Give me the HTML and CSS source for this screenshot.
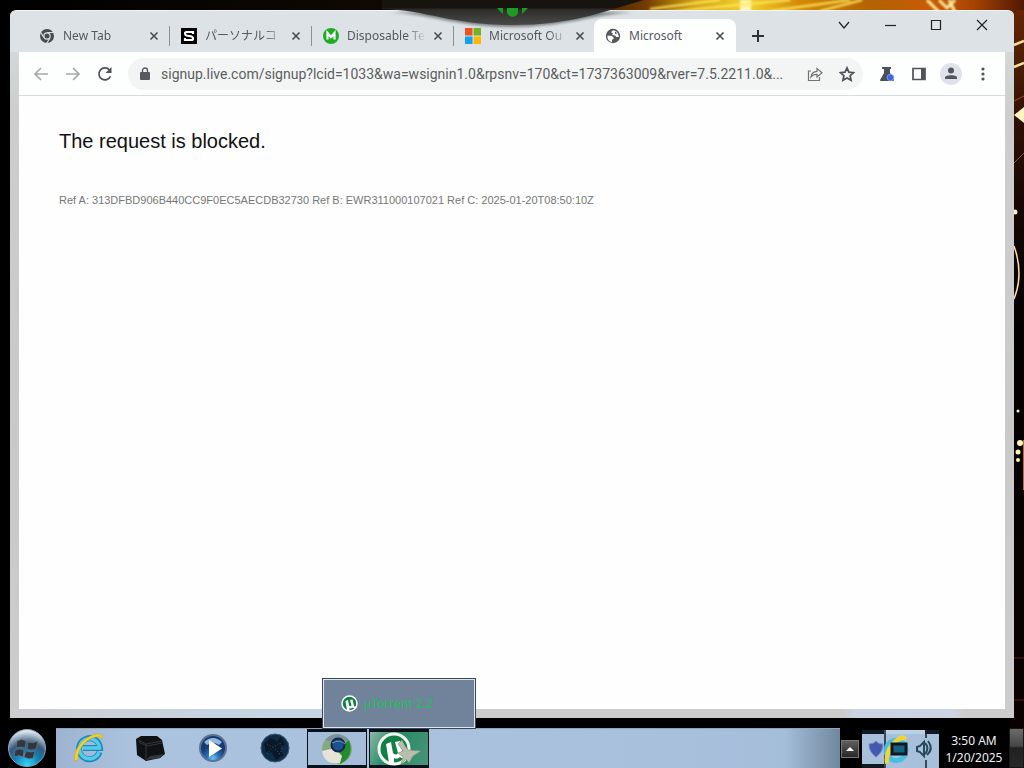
FILE: index.html
```html
<!DOCTYPE html>
<html lang="en">
<head>
<meta charset="utf-8">
<title>Microsoft</title>
<link rel="stylesheet" href="styles.css">
</head>
<body>
<svg class="wallpaper wallpaper-top" viewBox="0 0 1024 60" preserveAspectRatio="xMaxYMin slice" aria-hidden="true">
  <defs>
    <linearGradient id="fire" x1="0" x2="1"><stop offset="0" stop-color="#000"/><stop offset=".52" stop-color="#160c03"/><stop offset=".63" stop-color="#713a00"/><stop offset=".68" stop-color="#d6a412"/><stop offset=".73" stop-color="#f4d32d"/><stop offset=".78" stop-color="#d48a08"/><stop offset=".85" stop-color="#b36302"/><stop offset=".91" stop-color="#c75b05"/><stop offset=".95" stop-color="#a84404"/><stop offset="1" stop-color="#4f1703"/></linearGradient>
    <filter id="glow"><feGaussianBlur stdDeviation="1"/></filter>
  </defs>
  <rect width="1024" height="60" fill="url(#fire)"/>
  <g filter="url(#glow)">
  <path d="M740 0h11v12h-11z" fill="#fff7b0"/>
  <path d="M650 9l70-9M665 12L790 0M770 11l80-11M820 11l42-11" stroke="#ffe760" stroke-width="2" fill="none"/>
  <path d="M927 0l12 12M939 0l8 8 8-8M949 0l6 12" stroke="#ffed9b" stroke-width="3" fill="none"/>
  </g>
</svg>
<svg class="wallpaper wallpaper-side" viewBox="-4 0 14 728" aria-hidden="true">
  <defs><linearGradient id="ember" x1="0" x2="0" y1="0" y2="1"><stop offset="0" stop-color="#6c2403"/><stop offset=".08" stop-color="#4c2003"/><stop offset=".16" stop-color="#321004"/><stop offset=".28" stop-color="#160704"/><stop offset=".45" stop-color="#030100"/><stop offset="1" stop-color="#0b0200"/></linearGradient></defs>
  <rect x="-4" width="14" height="728" fill="url(#ember)"/>
  <g fill="none" stroke="#ffe197" stroke-width="2.5"><path d="M0 45l10-4M0 67l10-4"/><path d="M0 101l10-5M0 163l10-10" stroke="#8f5720" stroke-width="1"/><path d="M0 246q10 28 0 53" stroke-width="1.5"/></g>
  <path d="M0 115l10-8v16z" fill="#fff4bd"/>
  <g fill="#fff0bf"><circle cx="1" cy="212" r="2.500"/><circle cx="4" cy="411" r="1.500"/><circle cx="6" cy="443" r="3"/><circle cx="4" cy="452" r="2.500"/><circle cx="4" cy="460" r="2"/></g>
  <path d="M10 440v50" stroke="#b96f20" stroke-width="2"/>
  <path d="M0 658h10M0 700h10" stroke="#552306"/>
</svg>

<main class="desktop">
  <section class="window" aria-label="Browser">
    <header class="tabstrip">
      <nav class="tabs" aria-label="Tabs">
        <div class="tab">
          <svg class="favicon" viewBox="0 0 16 16"><circle cx="8" cy="8" r="7" fill="#454a50"/><circle cx="8" cy="8" r="3.7" fill="#d9dfe2"/><circle cx="8" cy="8" r="2.5" fill="#454a50"/><path d="M8 4.5h7M4.8 9.5L1.5 4M11 10l-3.5 5.5" stroke="#d9dfe2" stroke-width="1.2"/></svg>
          <span class="title">New Tab</span>
          <button class="close" aria-label="Close New Tab"><svg viewBox="0 0 10 10"><path d="M1.5 1.5l7 7m0-7l-7 7"/></svg></button>
        </div>
        <div class="tab">
          <svg class="favicon" viewBox="0 0 16 16"><path d="M0 0h16v16H0z"/><path d="M12 6V4H5.500Q4 4 4 5.500T5.500 7.500L10.500 8.500Q12 9 12 10.500T10.500 12H4v-2" fill="none" stroke="#fff" stroke-width="2.200"/></svg>
          <span class="title">パーソナルコ</span>
          <button class="close" aria-label="Close tab"><svg viewBox="0 0 10 10"><path d="M1.5 1.5l7 7m0-7l-7 7"/></svg></button>
        </div>
        <div class="tab">
          <svg class="favicon" viewBox="0 0 16 16"><circle cx="8" cy="8" r="8" fill="#20ab25"/><path d="M4.500 11.500V5L8 9l3.500-4v6.500" fill="none" stroke="#fff" stroke-width="2.200"/></svg>
          <span class="title">Disposable Te</span>
          <button class="close" aria-label="Close Disposable Temp"><svg viewBox="0 0 10 10"><path d="M1.5 1.5l7 7m0-7l-7 7"/></svg></button>
        </div>
        <div class="tab">
          <svg class="favicon" viewBox="0 0 16 16"><path d="M0 0h7.500v7.500H0z" fill="#ee5021"/><path d="M8.500 0H16v7.500H8.500z" fill="#72b220"/><path d="M0 8.500h7.500V16H0z" fill="#159ff0"/><path d="M8.500 8.500H16V16H8.500z" fill="#ffb900"/></svg>
          <span class="title">Microsoft Ou</span>
          <button class="close" aria-label="Close Microsoft Outlook"><svg viewBox="0 0 10 10"><path d="M1.500 1.500l7 7m0-7l-7 7"/></svg></button>
        </div>
        <div class="tab active">
          <svg class="favicon" viewBox="0 0 16 16"><circle cx="8" cy="8" r="7.200" fill="#54585c"/><path d="M2.500 7.500L7 8l2 2-2 2v2.200C3.500 13.500 2 10.500 2.500 7.500zM8 2.300l-2 2 2 1-1 1.700 3 .5 1.500 1.500h2.300c0-3.500-2.500-6.500-5.800-6.700z" fill="#fff"/><path d="M10 3.500l2.500 1.800-2.500.7z" fill="#54585c"/></svg>
          <span class="title">Microsoft</span>
          <button class="close" aria-label="Close Microsoft"><svg viewBox="0 0 10 10"><path d="M1.500 1.500l7 7m0-7l-7 7"/></svg></button>
        </div>
      </nav>
      <button class="new-tab" aria-label="New tab"><svg viewBox="0 0 14 14"><path d="M7 1v12M1 7h12"/></svg></button>
      <div class="window-controls">
        <button aria-label="Search tabs"><svg viewBox="0 0 12 12"><path d="M1 3l5 6 5-6"/></svg></button>
        <button aria-label="Minimize"><svg viewBox="0 0 12 12"><path d="M1 6.500h11"/></svg></button>
        <button aria-label="Maximize"><svg viewBox="0 0 12 12"><path d="M1.500 1.500h9v9h-9z"/></svg></button>
        <button aria-label="Close"><svg viewBox="0 0 12 12"><path d="M1 1l10 10M11 1L1 11"/></svg></button>
      </div>
    </header>

    <div class="toolbar">
      <button class="tool faded" aria-label="Back"><svg viewBox="0 0 16 16"><path d="M15 8H2m6-6L2 8l6 6"/></svg></button>
      <button class="tool faded" aria-label="Forward"><svg viewBox="0 0 16 16"><path d="M1 8h13M8 2l6 6-6 6"/></svg></button>
      <button class="tool" aria-label="Reload"><svg viewBox="0 0 16 16"><path d="M13.500 10.200A6 6 0 1 1 12.500 4"/><path d="M14.500 1v6h-6z" fill="#4f5357" stroke="none"/></svg></button>
      <div class="address">
        <svg class="lock" viewBox="0 0 10 14"><path d="M1 5h8q1 0 1 1v6q0 1-1 1H1q-1 0-1-1V6q0-1 1-1z" fill="#56595d"/><path d="M2.500 6V3.500a2.500 2.500 0 0 1 5 0V6" fill="none" stroke="#56595d" stroke-width="1.400"/></svg>
        <input class="url" type="text" aria-label="Address" value="signup.live.com/signup?lcid=1033&amp;wa=wsignin1.0&amp;rpsnv=170&amp;ct=1737363009&amp;rver=7.5.2211.0&amp;...">
        <button class="tool" aria-label="Share"><svg viewBox="0 0 16 16" class="thin"><path d="M4 5H1.500v9.500h11V11M4 11c.5-4 2.500-5.500 6-5.700V2.500L15 6.700 10 11V8.300C7 8.300 5.500 9 4 11z"/></svg></button>
        <button class="tool" aria-label="Bookmark"><svg viewBox="0 0 16 16"><path d="M8 1.800l1.900 4.300 4.600.5-3.400 3.100 1 4.600L8 11.900l-4.100 2.400 1-4.600-3.400-3.100 4.600-.5z"/></svg></button>
      </div>
      <button class="tool" aria-label="Experiments"><svg viewBox="0 0 16 16"><path d="M3 1h9v2h-1v4l4 7q0 1-1 1H2q-1 0-1-1l4-7V3H3z" fill="#4a5158" stroke="none"/><circle cx="11.500" cy="11.500" r="3.300" fill="#3a68e8" stroke="#a6bfff" stroke-width=".6"/></svg></button>
      <button class="tool" aria-label="Side panel"><svg viewBox="0 0 16 16"><path d="M2 2.500h12v11H2z"/><path d="M10 2h4v12h-4z" fill="#4f5357" stroke="none"/></svg></button>
      <button class="tool" aria-label="Profile"><svg class="avatar" viewBox="0 0 22 22"><circle cx="11" cy="11" r="11" fill="#dfe2ea" stroke="none"/><circle cx="11" cy="7.500" r="3" fill="#50565e" stroke="none"/><path d="M5 16v-1.500c0-3 12-3 12 0V16z" fill="#50565e" stroke="none"/></svg></button>
      <button class="tool" aria-label="Menu"><svg viewBox="0 0 16 16"><g fill="#4f5357" stroke="none"><circle cx="8" cy="3" r="1.600"/><circle cx="8" cy="8" r="1.600"/><circle cx="8" cy="13" r="1.600"/></g></svg></button>
    </div>

    <article class="page">
      <h1>The request is blocked.</h1>
      <p>Ref A: 313DFBD906B440CC9F0EC5AECDB32730 Ref B: EWR311000107021 Ref C: 2025-01-20T08:50:10Z</p>
    </article>
  </section>
</main>

<svg class="dock" viewBox="0 0 300 30" aria-hidden="true">
  <defs><linearGradient id="dockfill" x1="0" x2="0" y1="0" y2="1"><stop offset="0" stop-color="#17130d"/><stop offset=".3" stop-color="#17130e"/><stop offset=".4" stop-color="#302f2d"/><stop offset="1" stop-color="#494949"/></linearGradient><filter id="soft" x="-10%" y="-10%" width="120%" height="140%"><feGaussianBlur stdDeviation="1.500"/></filter></defs>
  <path d="M30 12C70 15 100 27 150 27S230 15 270 12z" fill="#777c7f" filter="url(#soft)"/>
  <path d="M20 0v9C65 10 90 25 150 25S240 12 282 0z" fill="url(#dockfill)"/>
  <path d="M145 8h11v4q0 4-5.500 5-5.500-1-5.500-5zM135 8h6v6zM166 8h-6v6z" fill="#1d9c25"/>
</svg>

<footer class="taskbar">
  <button class="start" aria-label="Start"><svg viewBox="0 0 38 38"><defs><radialGradient id="orb" cx=".5" cy=".95" r=".9"><stop offset="0" stop-color="#31d9fa"/><stop offset=".4" stop-color="#167bb0"/><stop offset=".65" stop-color="#385a79"/><stop offset="1" stop-color="#dce5ee"/></radialGradient></defs><circle cx="19" cy="19" r="18.500" fill="url(#orb)" stroke="#7da9c3"/><path d="M9 12q5-3 9 0l-1 7q-5-2-9 0zM20 13q5 2 10-1l-2 8q-5 2-9 0zM7 21q5-2 9 0l-1 7q-4-3-9 0zM18 22q5 2 9 0l-2 7q-4 2-9-1z" fill="#33363e" stroke="#75869b" stroke-width=".5"/></svg></button>
  <div class="tasks">
    <button class="task" aria-label="Internet Explorer"><svg viewBox="0 0 32 32"><path d="M26.500 20a10.500 10.500 0 1 1 .5-4H10" fill="none" stroke="#198bc3" stroke-width="6"/><path d="M26 20a10 10 0 1 1 .5-4H10" fill="none" stroke="#55cbea" stroke-width="3.500"/><path d="M2 29C-1 19 11 3 25 2q6 0 4 6 0-4-6-3C12 7 4 18 5 28z" fill="#f1d22d" stroke="#c3a51e" stroke-width=".5"/></svg></button>
    <button class="task" aria-label="File Explorer"><svg viewBox="0 0 32 32"><path d="M1 7l5-3h16l5 4 3 14-5 4-14 3-9-6z" fill="#101114"/><path d="M3 8l8 4 16-3M11 12v16M4 10l8 4 15-3" fill="none" stroke="#34363b"/><path d="M11 28l4-4 14-2-4 4z" fill="#33363b"/></svg></button>
    <button class="task" aria-label="Media Player"><svg viewBox="0 0 32 32"><defs><radialGradient id="media" cy=".9"><stop offset="0" stop-color="#6ac4fa"/><stop offset=".5" stop-color="#286db5"/><stop offset="1" stop-color="#173b76"/></radialGradient></defs><circle cx="16" cy="16" r="13" fill="url(#media)" stroke="#5c7291" stroke-width="2"/><path d="M7 10q9-8 18 0l-3 3q-6-4-12 0z" fill="#91b7dc"/><path d="M12 8v17l13-8.500z" fill="#fff"/></svg></button>
    <button class="task" aria-label="Globe"><svg viewBox="0 0 32 32"><circle cx="16" cy="16" r="14" fill="#102c44" stroke="#345b79"/><path d="M5 12l6-6 7 3 4-4 4 8-5 3 3 7-7 5-4-7-6-1z" fill="#0a1828"/><path d="M8 12l6 3 7-4 3 5-5 8M8 22l6-7 8 8" fill="none" stroke="#36536a" stroke-dasharray="1 2"/></svg></button>
    <button class="task open" aria-label="Chrome"><svg viewBox="0 0 32 32"><circle cx="16" cy="16" r="15" fill="#87aa7f"/><path d="M28 7q6 17-9 24l-5-8 9-12z" fill="#238c31"/><path d="M1 18l13-3 7 8-2 7C9 32 2 27 1 18z" fill="#e6e4d6"/><path d="M4 7Q16-4 28 7l-8 3z" fill="#79909a"/><circle cx="17" cy="12" r="6.500" fill="#20518c" stroke="#102747" stroke-width="2"/><path d="M11 10q8-4 13 1" fill="none" stroke="#7097ba"/></svg></button>
    <div class="task-group">
      <button class="task open torrent" aria-label="uTorrent"><svg class="torrent-icon" viewBox="0 0 44 34"><circle cx="17" cy="17" r="15" fill="#118044" stroke="#f3f7ee" stroke-width="3"/><path d="M9 12l5-2 2 11q3 3 5 0l-3-11 5-1 3 13q2 2 5 0v4q-5 2-8-1-3 3-6 1v6l-5-1z" fill="#fff"/><path d="M21 12l4-4 3 6 3 4 13 1-8 5-4 7-3-4-5 5 2-7-5-4 5-2z" fill="#b6bfae" stroke="#818d7d" stroke-width=".6"/></svg></button>
      <div class="preview"><svg viewBox="0 0 34 34"><circle cx="17" cy="17" r="15" fill="#118044" stroke="#fff" stroke-width="3"/><path d="M9 12l5-2 2 11q3 3 5 0l-3-11 5-1 3 13q2 2 5 0v4q-5 2-8-1-3 3-6 1v6l-5-1z" fill="#fff"/></svg><span>µTorrent 2.2</span></div>
    </div>
  </div>
  <button class="overflow" aria-label="Show hidden icons"><svg viewBox="0 0 10 6"><path d="M1 5l4-4 4 4z" fill="#fff"/></svg></button>
  <div class="tray" aria-label="Notification area"><svg viewBox="0 0 77 38">
    <path d="M0 0h77v4H0zM0 34h22v4H0z" fill="#101820"/><path d="M22 0h41v4H22z" fill="#b8d1e4"/>
    <path d="M23 0v38M64 0v8M64 30v8" stroke="#14212c" stroke-width="1.500"/>
    <path d="M7 14q5 0 7-3 3 4 7 3 0 8-7 13-7-5-7-13z" fill="#4359ad" stroke="#7184c6"/>
    <path d="M43 25a10 10 0 1 1 1-6H29" fill="none" stroke="#45bee2" stroke-width="5"/><path d="M23 34Q20 16 39 5l6 2-1 3Q27 11 27 33z" fill="#eed43d"/>
    <path d="M30 14h14v10H30z" fill="#14627f" stroke="#101723" stroke-width="3"/><path d="M55 17l3-1 4-4v14l-4-4-3-1zM63 13q5 5 0 11M66 11q6 8-1 14" fill="none" stroke="#29485e" stroke-width="2"/>
  </svg></div>
  <time class="clock" datetime="2025-01-20T03:50">3:50 AM<br>1/20/2025</time>
  <button class="show-desktop" aria-label="Show desktop"></button>
</footer>
</body>
</html>
```

FILE: styles.css
```css
* { box-sizing: border-box; }
body {
  margin: 0;
  min-height: 100vh;
  display: flex;
  flex-direction: column;
  position: relative;
  background: #000;
  font-family: "Noto Sans", "Noto Sans CJK JP", sans-serif;
  overflow: hidden;
}
button { border: 0; padding: 0; background: none; font: inherit; display: flex; align-items: center; justify-content: center; }
svg { display: block; flex: none; }

.wallpaper { position: absolute; top: 0; z-index: -1; }
.wallpaper-top { left: 0; width: 100%; height: 60px; }
.wallpaper-side { right: 0; width: 14px; height: 728px; top: 10px; margin-top: -10px; clip-path: inset(10px 0 0 0); }

.desktop { flex: 1; display: flex; padding: 10px; }
.window {
  flex: 1;
  display: flex;
  flex-direction: column;
  padding: 0 9px 9px;
  border-radius: 6px 6px 0 0;
  background:
    linear-gradient(to right, #cfcdd0, #c6d3e1 20%, #c6d5e5 32%, #ccc 45%, #ccc 83%, #ccd3e2 84%, #ccd3e2 94%, #ccc 95%) bottom / 100% 9px no-repeat,
    linear-gradient(#d8dfe1, #cccdcc 15%, #c8c9c8 60%, #ccc);
  border-top: 1px solid #f3f5f5;
}
.tabstrip { height: 41px; margin: 0 -9px; padding: 8px 9px 0; display: flex; background: #dce2e5; border-radius: 6px 6px 0 0; }
.tabs { display: flex; padding-left: 9px; }
.tab { width: 142px; height: 33px; padding: 0 8px 0 11px; display: flex; align-items: center; gap: 8px; position: relative; }
.tab:not(.active)::after { content: ""; position: absolute; right: 0; width: 1px; height: 20px; background: #8d9296; }
.tab:nth-child(4)::after { display: none; }
.tab.active { margin-left: -2px; background: #fdfefe; border-radius: 8px 8px 0 0; }
.favicon { width: 16px; height: 16px; }
.title { flex: 1; min-width: 0; margin-right: -4px; white-space: nowrap; font-size: 12px; line-height: 18px; color: #54595e; -webkit-mask-image: linear-gradient(to right, #000 75%, transparent); mask-image: linear-gradient(to right, #000 75%, transparent); }
.tab.active .title { mask-image: none; -webkit-mask-image: none; }
.close { width: 16px; height: 16px; }
.close svg { width: 10px; height: 10px; fill: none; stroke: #474c50; stroke-width: 1.6; }
.new-tab { width: 28px; height: 33px; margin-left: 8px; }
.new-tab svg { width: 14px; height: 14px; stroke: #2d3134; stroke-width: 2; }
.window-controls { display: flex; margin-left: auto; height: 12px; }
.window-controls button { width: 46px; height: 12px; }
.window-controls svg { width: 12px; height: 12px; fill: none; stroke: #222; stroke-width: 1.2; }

.toolbar { height: 44px; padding: 0 6px; display: flex; align-items: center; background: #fdfefe; border-bottom: 1px solid #d9dcdd; }
.tool { width: 32px; height: 32px; flex: none; }
.tool svg { width: 16px; height: 16px; fill: none; stroke: #4f5357; stroke-width: 1.7; }
.tool .thin { stroke-width: 1.2; stroke: #6f7478; }
.tool .avatar { width: 22px; height: 22px; }
.faded { opacity: .5; }
.address { flex: 1; min-width: 0; height: 32px; margin: 0 8px 0 7px; padding-left: 12px; display: flex; align-items: center; border-radius: 16px; background: #f3f4f4; }
.lock { width: 10px; height: 14px; margin-right: 11px; }
.url { flex: 1; min-width: 0; border: 0; outline: 0; padding: 0; background: none; font: 14px/20px Roboto, sans-serif; color: #5b5e61; text-overflow: ellipsis; }

.page { flex: 1; padding: 32px 40px; background: #fefefe; font-family: "Liberation Sans", Arial, sans-serif; }
.page h1 { margin: 0; font-size: 20px; line-height: 26px; font-weight: 400; color: #111; }
.page p { margin: 39px 0 0; font-size: 11px; line-height: 14px; color: #777; }

.dock { position: absolute; top: 0; left: 50%; width: 300px; height: 30px; margin-left: -150px; }

.taskbar { height: 40px; display: flex; align-items: stretch; background: #000; color: #f1f1f1; }
.start { width: 56px; height: 40px; padding-right: 2px; }
.start svg { width: 38px; height: 38px; }
.tasks { flex: 1; display: flex; gap: 2px; padding-left: 3px; border-top: 1px solid #8fa4b7; background: linear-gradient(to right, #9db3cf, #acc3df 10%, #a9c0dd 80%, #a4bdd9 93%, #71879e); }
.task { width: 60px; height: 38px; }
.task svg { width: 32px; height: 32px; }
.task.open { border: solid #07111b; border-width: 3px 1px; background: #a6bdda; height: 39px; }
.task.torrent { background: linear-gradient(120deg, #8bb8a8, #268a67 40%, #4a9576); }
.task .torrent-icon { width: 44px; height: 34px; }
.task-group { position: relative; }
.preview { position: absolute; bottom: 100%; left: 50%; width: 154px; height: 51px; margin-left: -77px; padding-left: 18px; display: flex; align-items: center; gap: 6px; background: #71829b; border: 1px solid #3b4654; box-shadow: inset 0 0 0 1px #dfe6ef; font: 12px/16px "Noto Sans", sans-serif; color: #16c450; white-space: nowrap; }
.preview svg { width: 17px; height: 17px; }
.overflow { width: 18px; height: 18px; margin: 12px 3px 0 1px; background: linear-gradient(#606060, #262626); border: 1px solid #777; }
.overflow svg { width: 10px; height: 6px; }
.tray { width: 77px; height: 38px; margin-top: 2px; background: #a8c0db; }
.tray svg { width: 77px; height: 38px; }
.clock { width: 70px; padding-top: 4px; text-align: center; font-size: 12px; line-height: 17px; }
.show-desktop { width: 15px; background: linear-gradient(#6b6b6b, #464646 45%, #202020 50%, #292929); border: 1px solid #171717; }
```
